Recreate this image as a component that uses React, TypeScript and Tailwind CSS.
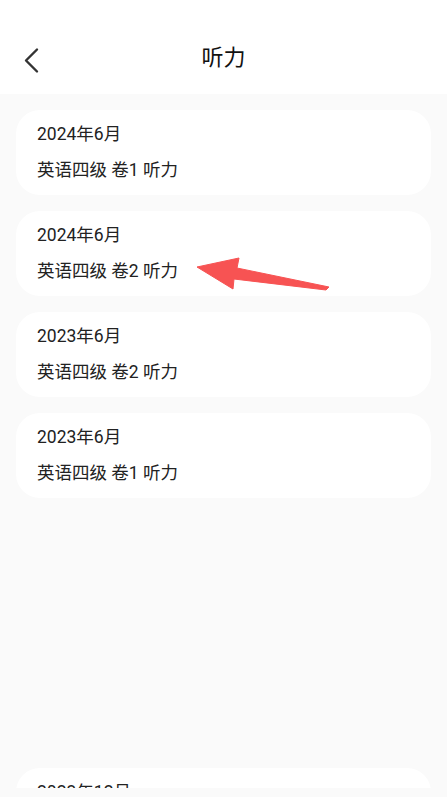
import React from "react";

const papers = [
  { date: "2024年6月", title: "英语四级 卷1 听力" },
  { date: "2024年6月", title: "英语四级 卷2 听力" },
  { date: "2023年6月", title: "英语四级 卷2 听力" },
  { date: "2023年6月", title: "英语四级 卷1 听力" },
];

function PaperCard({ date, title }: { date: string; title: string }) {
  return (
    <div className="h-[85px] shrink-0 rounded-[24px] bg-white px-[21px] pt-3 flex flex-col gap-3 text-[17.5px] leading-6 text-[#222]">
      <span>{date}</span>
      <span>{title}</span>
    </div>
  );
}

export default function App() {
  return (
    <div
      className="w-[447px] h-[797px] bg-[#fafafa] flex flex-col overflow-hidden"
      style={{ fontFamily: "Roboto, 'Noto Sans CJK SC', sans-serif" }}
    >
      {/* Header */}
      <header className="h-[94px] shrink-0 bg-white relative flex items-center justify-center pt-[22px]">
        <button className="absolute left-[18px] top-[42px] p-1">
          <svg width="22" height="30" viewBox="0 0 22 30" fill="none">
            <path d="M15 3.5 L4 14.5 L15 25.5" stroke="#333" strokeWidth="2.4" strokeLinecap="round" strokeLinejoin="round" />
          </svg>
        </button>
        <h1 className="text-[22px] text-[#111] leading-8">听力</h1>
      </header>

      {/* List */}
      <div className="relative h-[694px] shrink-0 overflow-hidden px-4 pt-4 flex flex-col gap-4">
        {papers.map((p, i) => (
          <PaperCard key={i} date={p.date} title={p.title} />
        ))}
        <div className="mt-[254px]">
          <PaperCard date="2023年12月" title="英语四级 卷1 听力" />
        </div>

        {/* Annotation arrow */}
        <svg className="absolute left-0 top-0 pointer-events-none" width="447" height="694" viewBox="0 94 447 694">
          <polygon
            points="197,267 239,258 237,268 329,287 326,290 234,279 233,289"
            fill="#f75353"
            strokeLinejoin="round"
            stroke="#f75353"
            strokeWidth="1"
          />
        </svg>
      </div>
    </div>
  );
}
